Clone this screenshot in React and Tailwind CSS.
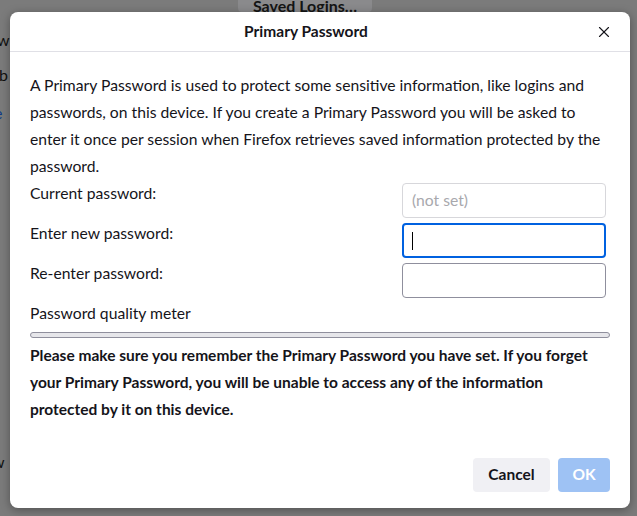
import { X } from 'lucide-react'

const font = { fontFamily: 'Lato, "Noto Sans", sans-serif' }

function Field({ label, children }) {
  return (
    <>
      <div className="h-[40px] leading-[27px]">{label}</div>
      <div className="h-[40px] pt-[3px] pr-[4px]">{children}</div>
    </>
  )
}

export default function App() {
  return (
    <div className="relative w-[637px] h-[516px] overflow-hidden bg-[#7b7b7b] pl-[10px] pt-[12px] text-[#15141a]" style={font}>
      {/* page behind the overlay */}
      <div className="absolute left-[238px] top-[-14px] w-[134px] h-[26px] rounded bg-[#8a8a8c] text-center text-[16px] font-bold leading-[40px] text-[#141414]">
        Saved Logins…
      </div>
      <div className="absolute left-[-10px] top-[28px] text-[16px] text-[#111]">sw</div>
      <div className="absolute left-[-1px] top-[63px] text-[16px] text-[#111]">b</div>
      <div className="absolute left-[-6px] top-[101px] text-[16px] text-[#0b3a8a]">e</div>
      <div className="absolute left-[-8px] top-[450px] text-[16px] text-[#111]">w</div>

      {/* dialog */}
      <div className="relative w-[620px] h-[496px] rounded-lg bg-white shadow-[0_2px_10px_rgba(0,0,0,0.35)] flex flex-col">
        <div className="h-[40px] flex items-center border-b border-[#e0e0e6] pl-[20px]">
          <div className="flex-1 text-center text-[15.5px] font-bold pt-[1px]">Primary Password</div>
          <button className="w-[48px] h-[40px] flex items-center justify-center pr-[4px]">
            <X size={18} strokeWidth={1.5} className="text-[#15141a]" />
          </button>
        </div>

        <div className="flex-1 flex flex-col px-[20px] pt-[20px] pb-[16px] text-[15.7px]">
          <p className="leading-[27px]">
            A Primary Password is used to protect some sensitive information, like logins and passwords, on this device. If you create a Primary Password you will be asked to enter it once per session when Firefox retrieves saved information protected by the password.
          </p>

          <div className="grid grid-cols-[1fr_208px]">
            <Field label="Current password:">
              <div className="h-[35px] rounded border border-[#d7d7db] px-[9px] flex items-center text-[#a8a8ad]">(not set)</div>
            </Field>
            <Field label="Enter new password:">
              <div className="h-[35px] rounded border-2 border-[#0061e0] px-[8px] flex items-center">
                <span className="w-px h-[18px] bg-black" />
              </div>
            </Field>
            <Field label="Re-enter password:">
              <div className="h-[35px] rounded border border-[#8f8f9d]" />
            </Field>
          </div>

          <div className="leading-[27px]">Password quality meter</div>
          <div className="mt-[5px] h-[6px] rounded-full border border-[#8f8f9d] bg-[#e6e6ea]" />

          <p className="mt-[4px] leading-[27px] font-bold text-[15.5px]">
            Please make sure you remember the Primary Password you have set. If you forget your Primary Password, you will be unable to access any of the information protected by it on this device.
          </p>

          <div className="mt-auto flex justify-end gap-[8px]">
            <button className="h-[34px] w-[77px] rounded bg-[#f0f0f4] font-bold text-[15.5px]">Cancel</button>
            <button className="h-[34px] w-[52px] rounded bg-[#9ec2f4] font-bold text-[15.5px] text-white">OK</button>
          </div>
        </div>
      </div>
    </div>
  )
}
